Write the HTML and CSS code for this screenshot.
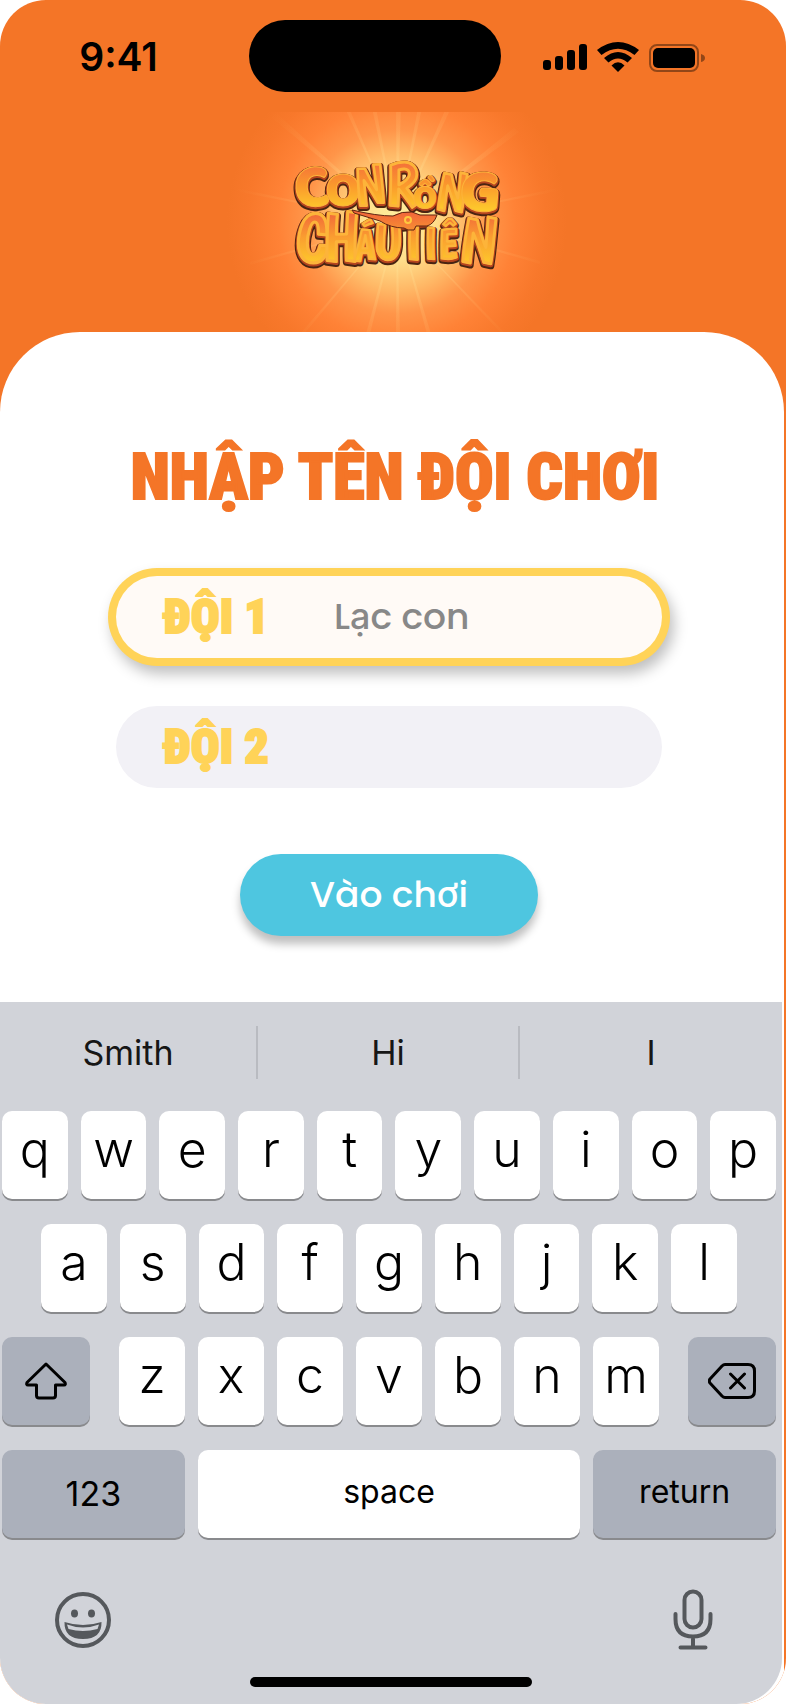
FILE: index.html
```html
<!DOCTYPE html>
<html lang="vi">
<head>
<meta charset="utf-8">
<meta name="viewport" content="width=device-width, initial-scale=1">
<title>Con Rồng Cháu Tiên</title>
<link rel="stylesheet" href="styles.css">
</head>
<body>
<div class="phone">
  <header class="header">
    <div class="status">
      <time class="clock">9:41</time>
      <div class="island"></div>
      <svg class="status-icons" viewBox="0 0 164 32" width="164" height="32" aria-hidden="true">
        <rect x="0" y="20" width="8" height="10" rx="3"/>
        <rect x="12" y="16" width="8" height="14" rx="3"/>
        <rect x="24" y="10" width="8" height="20" rx="3"/>
        <rect x="36" y="4" width="8" height="26" rx="3"/>
        <path d="M54 10Q75-6 96 10L91.500 15Q75 2.500 58.500 15Z"/>
        <path d="M61 18Q75 6 89 18L84.500 22.500Q75 14.500 65.500 22.500Z"/>
        <path d="M68.500 25.500Q75 19 81.500 25.500L75 32Z"/>
        <rect class="battery-case" x="107" y="5" width="48" height="26" rx="7"/>
        <rect x="110" y="8" width="42" height="20" rx="5"/>
        <path class="battery-tip" d="M158 14Q162 15 162 18Q162 21 158 22Z"/>
      </svg>
    </div>
    <svg class="logo" viewBox="222 112 350 220" width="350" height="220" role="img" aria-label="Con Rồng Cháu Tiên">
      <defs>
        <radialGradient id="halo" gradientUnits="userSpaceOnUse" cx="397" cy="222" r="170">
          <stop offset="0" stop-color="#fff0a0"/>
          <stop offset=".22" stop-color="#ffdf8c"/>
          <stop offset=".4" stop-color="#ffb866"/>
          <stop offset=".54" stop-color="#ff9549"/>
          <stop offset=".7" stop-color="#ff8236"/>
          <stop offset=".88" stop-color="#f8782b"/>
          <stop offset="1" stop-color="#f47527"/>
        </radialGradient>
        <radialGradient id="rayfade" gradientUnits="userSpaceOnUse" cx="397" cy="222" r="165">
          <stop offset=".3" stop-color="#ffe69a" stop-opacity=".3"/>
          <stop offset="1" stop-color="#ffb060" stop-opacity="0"/>
        </radialGradient>
        <linearGradient id="gold1" gradientUnits="userSpaceOnUse" x1="0" y1="162" x2="0" y2="210">
          <stop offset="0" stop-color="#f4703a"/>
          <stop offset=".5" stop-color="#fb9a2c"/>
          <stop offset="1" stop-color="#fdca2c"/>
        </linearGradient>
        <linearGradient id="gold2" gradientUnits="userSpaceOnUse" x1="0" y1="212" x2="0" y2="262">
          <stop offset="0" stop-color="#f1663a"/>
          <stop offset=".5" stop-color="#fa9d30"/>
          <stop offset="1" stop-color="#fdc62c"/>
        </linearGradient>
        <g id="top-line">
          <text class="round" font-size="62" x="313" y="207" rotate="-4">C</text>
          <text class="round" font-size="50" x="343" y="205">O</text>
          <text font-size="54" x="372" y="205" rotate="-6">N</text>
          <text font-size="60" x="402" y="205">R</text>
          <text class="round" font-size="34" x="425" y="208">Ồ</text>
          <text font-size="54" x="450" y="208" rotate="8">N</text>
          <text class="round" font-size="62" x="479" y="209" rotate="4">G</text>
        </g>
        <g id="bottom-line">
          <text font-size="68" x="313" y="261">C</text>
          <text font-size="68" x="340" y="260" rotate="2">H</text>
          <text font-size="42" x="365" y="259">Á</text>
          <text font-size="52" x="388" y="259">U</text>
          <text font-size="58" x="413" y="259">T</text>
          <text font-size="42" x="430" y="258">I</text>
          <text font-size="42" x="448" y="258">Ê</text>
          <text font-size="64" x="477" y="260" rotate="6">N</text>
        </g>
        <path id="bird" d="M352 210Q377 216 393 216Q402 211 412 212L420 215L437 215Q434 224 427 226L416 226L414 230H408L404 228Q391 228 380 221L354 213Z"/>
      </defs>
      <rect x="222" y="112" width="350" height="220" fill="url(#halo)"/>
      <g fill="url(#rayfade)">
        <path d="M397 222L345 108H349Z"/><path d="M397 222L372 108H376Z"/><path d="M397 222L396 108H401Z"/><path d="M397 222L418 108H422Z"/><path d="M397 222L446 108H451Z"/>
        <path d="M397 222L270 116L275 112Z"/><path d="M397 222L514 128L519 132Z"/><path d="M397 222L235 188V191Z"/><path d="M397 222L558 188V191Z"/><path d="M397 222L250 262V265Z"/><path d="M397 222L540 264V261Z"/>
        <path d="M397 222L300 334H304Z"/><path d="M397 222L366 334H370Z"/><path d="M397 222L396 334H400Z"/><path d="M397 222L427 334H431Z"/><path d="M397 222L502 334H506Z"/>
      </g>
      <g class="letters" aria-hidden="true">
        <g class="depth"><use href="#top-line" y="2"/><use href="#bottom-line" y="2"/></g>
        <g class="side"><use href="#top-line" y="1"/><use href="#bottom-line" y="1"/></g>
        <use class="face" href="#top-line" fill="url(#gold1)"/>
        <use class="face" href="#bottom-line" fill="url(#gold2)"/>
        <use class="bird" href="#bird" fill="url(#gold2)"/>
        <circle class="eye" cx="408" cy="220" r="3"/>
      </g>
    </svg>
  </header>

  <main class="sheet">
    <form class="form">
      <h1 class="title">NHẬP TÊN ĐỘI CHƠI</h1>
      <div class="field field-active">
        <label class="label" for="team1">ĐỘI 1</label>
        <input class="input" id="team1" type="text" placeholder="Lạc con">
      </div>
      <div class="field">
        <label class="label" for="team2">ĐỘI 2</label>
        <input class="input" id="team2" type="text">
      </div>
      <button class="play" type="button">Vào chơi</button>
    </form>

    <section class="keyboard" aria-label="Keyboard">
      <div class="suggestions">
        <button class="suggestion" type="button">Smith</button>
        <button class="suggestion" type="button">Hi</button>
        <button class="suggestion" type="button">I</button>
      </div>
      <div class="rows">
        <div class="row row-ten">
          <button class="key" type="button">q</button><button class="key" type="button">w</button><button class="key" type="button">e</button><button class="key" type="button">r</button><button class="key" type="button">t</button><button class="key" type="button">y</button><button class="key" type="button">u</button><button class="key" type="button">i</button><button class="key" type="button">o</button><button class="key" type="button">p</button>
        </div>
        <div class="row row-nine">
          <button class="key" type="button">a</button><button class="key" type="button">s</button><button class="key" type="button">d</button><button class="key" type="button">f</button><button class="key" type="button">g</button><button class="key" type="button">h</button><button class="key" type="button">j</button><button class="key" type="button">k</button><button class="key" type="button">l</button>
        </div>
        <div class="row row-shift">
          <button class="key key-gray key-icon" type="button" aria-label="Shift">
            <svg viewBox="0 0 42 38" width="42" height="38"><path d="M21 2L2 20.500Q1 23 3 23H11.500V33.500Q11.500 36 14 36H28Q30.500 36 30.500 33.500V23H39Q41 23 40 20.500Z"/></svg>
          </button>
          <div class="row row-seven">
            <button class="key" type="button">z</button><button class="key" type="button">x</button><button class="key" type="button">c</button><button class="key" type="button">v</button><button class="key" type="button">b</button><button class="key" type="button">n</button><button class="key" type="button">m</button>
          </div>
          <button class="key key-gray key-icon" type="button" aria-label="Delete">
            <svg viewBox="0 0 48 38" width="48" height="38"><path d="M17 2.500H40Q46.500 2.500 46.500 9V29Q46.500 35.500 40 35.500H17Q15.500 35.500 14 34L2 21Q.5 19 2 17L14 4Q15.500 2.500 17 2.500ZM22.500 12L36.500 26M36.500 12L22.500 26"/></svg>
          </button>
        </div>
        <div class="row row-space">
          <button class="key key-gray key-word key-number" type="button">123</button>
          <button class="key key-word" type="button">space</button>
          <button class="key key-gray key-word" type="button">return</button>
        </div>
      </div>
      <div class="tools">
        <button class="tool" type="button" aria-label="Emoji">
          <svg viewBox="0 0 60 60" width="60" height="60">
            <circle class="line" cx="30" cy="30" r="26"/>
            <ellipse cx="21.500" cy="23.500" rx="3.500" ry="4"/><ellipse cx="38.500" cy="23.500" rx="3.500" ry="4"/>
            <path fill-rule="evenodd" d="M11.500 32Q30 38 48.500 32Q49 49 30 49Q11 49 11.500 32ZM14 34.500Q30 40.500 46 34.500L44.500 39Q30 43 15.500 39Z"/>
          </svg>
        </button>
        <button class="tool" type="button" aria-label="Dictation">
          <svg viewBox="0 0 40 62" width="40" height="62">
            <rect class="line" x="11.500" y="2.500" width="17" height="36" rx="8.500"/>
            <path class="line" d="M2.500 25V30Q2.500 47.500 20 47.500Q37.500 47.500 37.500 30V25M20 48V58M7.500 58.500H32.500"/>
          </svg>
        </button>
      </div>
      <div class="home"></div>
    </section>
  </main>
</div>
</body>
</html>
```
FILE: styles.css
```css
* { box-sizing: border-box; }
body { margin: 0; background: #fff; font-family: Inter, "Liberation Sans", sans-serif; }
button, input { font: inherit; color: inherit; border: 0; padding: 0; background: none; }

.phone {
  display: flex;
  flex-direction: column;
  min-height: 100vh;
  overflow: hidden;
  border-radius: 46px;
  background: #f47527;
}

/* Status bar and logo */
.header { display: flex; flex-direction: column; }
.status {
  display: grid;
  grid-template-columns: 249fr 252px 285fr;
  align-items: center;
  height: 112px;
}
.clock { padding-right: 12px; text-align: center; font-size: 39px; font-weight: 600; }
.island { height: 72px; border-radius: 36px; background: #000; }
.status-icons { margin-left: 42px; }
.battery-case { fill: none; stroke: #000; stroke-width: 2; opacity: .4; }
.battery-tip { opacity: .4; }
.logo { align-self: center; margin-left: 8px; }
.letters { font-family: Boogaloo, "Roboto Condensed", "Liberation Sans", sans-serif; font-weight: 700; text-anchor: middle; stroke-linejoin: round; }
.round { font-family: "Baloo 2", "Liberation Sans", sans-serif; font-weight: 800; }
.depth { fill: #5e2410; stroke: #4a2412; stroke-width: 5; }
.side { fill: #c8422c; stroke: #b5441f; stroke-width: 3; }
.face { stroke: #fdb43a; stroke-width: 1; }
.bird { stroke: #5e2410; stroke-width: 1; }
.eye { fill: none; stroke: #ffc83e; stroke-width: 2; }

/* Team form */
.sheet {
  display: flex;
  flex-direction: column;
  flex: 1;
  margin-right: 2px;
  border-radius: 80px 80px 0 0;
  background: #fff;
}
.form {
  display: flex;
  flex-direction: column;
  align-items: center;
  flex: 1;
  padding: 106px 122px 66px 116px;
}
.title {
  margin: 0 0 58px;
  padding-left: 12px;
  font: 900 64px/80px "Roboto Condensed", Roboto, sans-serif;
  color: #f47527;
  white-space: nowrap;
  -webkit-text-stroke: 2px #f47527;
}
.field {
  display: flex;
  align-items: center;
  width: 100%;
  height: 82px;
  margin-bottom: 48px;
  padding: 0 47px;
  border-radius: 41px;
  background: #f2f1f6;
}
.field-active {
  background: #fffaf6;
  box-shadow: 0 0 0 8px #ffd358, 4px 8px 14px 8px rgba(0, 0, 0, .25);
}
.label {
  width: 171px;
  font: 900 48px/60px "Roboto Condensed", Roboto, sans-serif;
  color: #ffd358;
  -webkit-text-stroke: 2px #ffd358;
}
.input { flex: 1; min-width: 0; font: 500 36px/50px Poppins, Inter, sans-serif; color: #888; outline: 0; }
.input::placeholder { color: #888; opacity: 1; }
.play {
  width: 298px;
  height: 82px;
  margin-top: 18px;
  border-radius: 41px;
  background: #4ec6e0;
  box-shadow: 0 8px 8px rgba(0, 0, 0, .25);
  font: 500 36px/50px Poppins, Inter, sans-serif;
  color: #fff;
}

/* Keyboard */
.keyboard {
  margin-right: 2px;
  padding-bottom: 17px;
  border-radius: 0 0 46px 46px;
  background: #d1d3d9;
}
.suggestions { display: grid; grid-template-columns: 256fr 262fr 264fr; padding: 24px 0 32px; }
.suggestion { height: 53px; font-size: 34px; color: #161616; }
.suggestion + .suggestion { border-left: 2px solid #b9bbc1; }
.rows { display: grid; gap: 25px; padding: 0 6px 0 2px; }
.row { display: grid; gap: 13px; }
.row-ten { grid-template-columns: repeat(10, 1fr); }
.row-nine { grid-template-columns: repeat(9, 1fr); padding: 0 39px; }
.row-seven { grid-template-columns: repeat(7, 1fr); }
.row-shift { grid-template-columns: 88px 1fr 88px; gap: 29px; }
.row-space { grid-template-columns: 183fr 383fr 183fr; }
.key {
  height: 88px;
  padding-bottom: 12px;
  border-radius: 10px;
  background: #fff;
  box-shadow: 0 2px 0 #898a8d;
  font-size: 50px;
  font-weight: 350;
  line-height: 60px;
  color: #000;
}
.key-gray { background: #abb0bb; }
.key-word { padding-bottom: 4px; font-size: 32px; font-weight: 400; }
.key-number { padding-bottom: 0; font-size: 34px; }
.key-icon { display: grid; place-items: center; padding: 0; }
.key-icon svg { fill: none; stroke: #000; stroke-width: 3; stroke-linejoin: round; stroke-linecap: round; }
.tools { display: flex; justify-content: space-between; align-items: center; padding: 51px 69px 26px 53px; }
.tool { display: flex; }
.tool svg { fill: #55585c; }
.tool .line { fill: none; stroke: #55585c; stroke-width: 4; stroke-linecap: round; }
.home { width: 282px; height: 10px; margin: 0 auto; border-radius: 5px; background: #000; }
```
